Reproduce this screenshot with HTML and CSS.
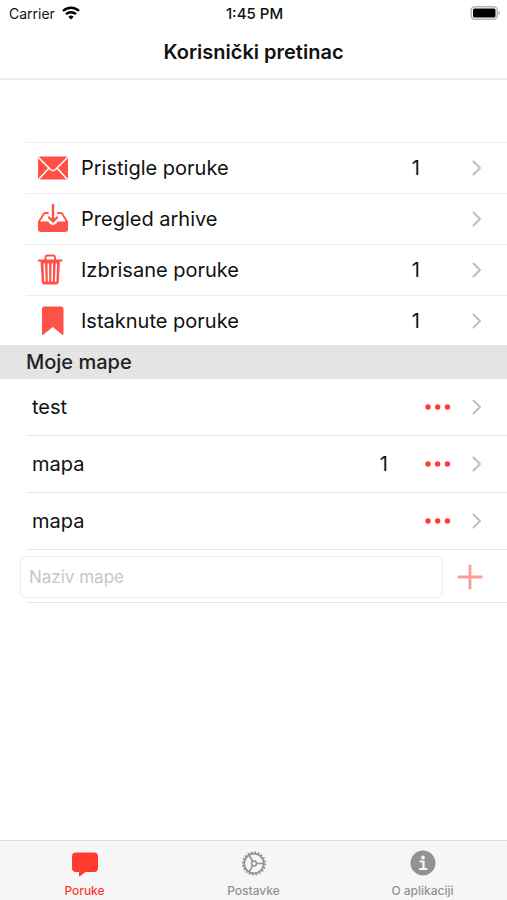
FILE: index.html
```html
<!DOCTYPE html>
<html lang="hr">
<head>
    <meta charset="UTF-8">
    <meta name="viewport" content="width=device-width, initial-scale=1.0">
    <title>Korisnički pretinac</title>
    <link rel="stylesheet" href="styles.css">
</head>
<body>
    <svg class="defs" width="0" height="0" aria-hidden="true">
        <symbol id="chevron" viewBox="0 0 10 16">
            <path d="M1.5 1.5 8 8l-6.500 6.500" fill="none" stroke="#bfbfc1" stroke-width="2" stroke-linecap="round" stroke-linejoin="round"/>
        </symbol>
        <symbol id="dots" viewBox="0 0 26 6">
            <circle cx="3" cy="3" r="2.700"/>
            <circle cx="12.700" cy="3" r="2.700"/>
            <circle cx="22.400" cy="3" r="2.700"/>
        </symbol>
    </svg>

    <div class="status-bar">
        <div class="carrier">
            <span>Carrier</span>
            <svg width="20" height="14" viewBox="0 0 18 14" fill="none" stroke="#000" stroke-width="2.400">
                <path d="M1 5a11.500 11.500 0 0 1 16 0"/>
                <path d="M4 8.200a7.200 7.200 0 0 1 10 0"/>
                <path d="M9 13.500 6.300 10.800a4 4 0 0 1 5.400 0z" fill="#000" stroke="none"/>
            </svg>
        </div>
        <span class="time">1:45 PM</span>
        <div class="battery">
            <svg width="30" height="14" viewBox="0 0 30 14">
                <rect x="1.200" y="0.800" width="26" height="12.400" rx="3.500" fill="#fff" stroke="#b4b4b4" stroke-width="1.500"/>
                <rect x="3" y="2.500" width="22.500" height="9" rx="1.500" fill="#000"/>
                <path d="M28.400 4.800c2 .8 2 3.600 0 4.400z" fill="#b4b4b4"/>
            </svg>
        </div>
    </div>

    <header class="nav-bar">
        <h1>Korisnički pretinac</h1>
    </header>

    <main>
        <ul class="list folders">
            <li>
                <a href="#" class="row">
                    <svg class="icon" width="32" height="32" viewBox="0 0 32 32">
                        <rect x="1" y="4.500" width="30" height="23" rx="2" fill="#ff5148"/>
                        <path d="M1.500 5.500 13.500 17.500q2.500 2.300 5 0L30.500 5.500M2 27 12 16M30 27 20 16" fill="none" stroke="#fff" stroke-width="1.500"/>
                    </svg>
                    <span class="name">Pristigle poruke</span>
                    <span class="count">1</span>
                    <svg class="chevron" width="10" height="16"><use href="#chevron"/></svg>
                </a>
            </li>
            <li>
                <a href="#" class="row">
                    <svg class="icon" width="32" height="32" viewBox="0 0 32 32" fill="none" stroke="#ff5148" stroke-width="1.800" stroke-linecap="round" stroke-linejoin="round">
                        <path d="M1 18.500h9.500c1.500 0 1.500 1.200 2.500 2.200q3 2.600 6 0c1-1 1-2.200 2.500-2.200H31v7.500a3 3 0 0 1-3 3H4a3 3 0 0 1-3-3z" fill="#ff5148" stroke="none"/>
                        <path d="M11 10H8.500q-1.200 0-1.800 1L2 18.500M21 10h2.500q1.200 0 1.800 1L30 18.500"/>
                        <path d="M16 2v15.500M12 14.500l4 4 4-4" stroke-width="2.400"/>
                    </svg>
                    <span class="name">Pregled arhive</span>
                    <svg class="chevron" width="10" height="16"><use href="#chevron"/></svg>
                </a>
            </li>
            <li>
                <a href="#" class="row">
                    <svg class="icon" width="32" height="32" viewBox="0 0 32 32" fill="none" stroke="#ff5148" stroke-linecap="round" stroke-linejoin="round">
                        <path d="M1.700 6.500h23" stroke-width="1.900"/>
                        <path d="M8.500 6V3.500q0-2 2-2h5.500q2 0 2 2V6" stroke-width="1.900"/>
                        <path d="M3.500 7h19.500L21.800 28q-.2 2.500-2.700 2.500H7.500Q5 30.500 4.800 28z" fill="#ff5148" stroke="none"/>
                        <path d="M7.300 10l.6 17M11.300 10l.2 17M15.300 10l-.2 17M19.300 10l-.6 17" stroke="#fff" stroke-width="1.500"/>
                    </svg>
                    <span class="name">Izbrisane poruke</span>
                    <span class="count">1</span>
                    <svg class="chevron" width="10" height="16"><use href="#chevron"/></svg>
                </a>
            </li>
            <li>
                <a href="#" class="row">
                    <svg class="icon" width="32" height="32" viewBox="0 0 32 32">
                        <path d="M5 4q0-2.500 2.500-2.500h16.500q2.500 0 2.500 2.500v25q0 1.800-1.500.6L15.800 22 6.500 29.600q-1.500 1.200-1.500-.6z" fill="#ff5148"/>
                    </svg>
                    <span class="name">Istaknute poruke</span>
                    <span class="count">1</span>
                    <svg class="chevron" width="10" height="16"><use href="#chevron"/></svg>
                </a>
            </li>
        </ul>

        <h2>Moje mape</h2>

        <ul class="list maps">
            <li class="row">
                <a href="#" class="name">test</a>
                <button type="button" class="more" aria-label="Opcije"><svg width="26" height="6"><use href="#dots"/></svg></button>
                <svg class="chevron" width="10" height="16"><use href="#chevron"/></svg>
            </li>
            <li class="row">
                <a href="#" class="name">mapa</a>
                <span class="count">1</span>
                <button type="button" class="more" aria-label="Opcije"><svg width="26" height="6"><use href="#dots"/></svg></button>
                <svg class="chevron" width="10" height="16"><use href="#chevron"/></svg>
            </li>
            <li class="row">
                <a href="#" class="name">mapa</a>
                <button type="button" class="more" aria-label="Opcije"><svg width="26" height="6"><use href="#dots"/></svg></button>
                <svg class="chevron" width="10" height="16"><use href="#chevron"/></svg>
            </li>
        </ul>

        <form class="new-map">
            <input type="text" placeholder="Naziv mape" aria-label="Naziv mape">
            <button type="button" class="add" aria-label="Dodaj mapu">
                <svg width="26" height="26" viewBox="0 0 26 26" fill="none" stroke="#ff9c98" stroke-width="2.800" stroke-linecap="round">
                    <path d="M13 1.800v22.400M1.800 13h22.400"/>
                </svg>
            </button>
        </form>
    </main>

    <nav class="tab-bar">
        <a href="#" class="tab active">
            <svg width="28" height="28" viewBox="0 0 28 28">
                <path d="M5 3.500h18q4 0 4 4v11.500q0 4-4 4H14.500L9 27.300q-1 .8-1-.5v-3.800H5q-4 0-4-4V7.500q0-4 4-4z" fill="#ff3b30"/>
            </svg>
            <span>Poruke</span>
        </a>
        <a href="#" class="tab">
            <svg width="28" height="28" viewBox="0 0 28 28" fill="none" stroke="#929292">
                <circle cx="14" cy="14.500" r="11.300" stroke-width="1.600" stroke-dasharray="1.750 1.800"/>
                <circle cx="14" cy="14.500" r="9.800" stroke-width="1.800"/>
                <circle cx="14" cy="14.500" r="2.500" stroke-width="1.500"/>
                <path d="M16.500 14.500h7M12.600 12.200 9.100 6.100M12.600 16.800l-3.500 6.100" stroke-width="1.600"/>
            </svg>
            <span>Postavke</span>
        </a>
        <a href="#" class="tab">
            <svg width="28" height="28" viewBox="0 0 28 28">
                <circle cx="14" cy="14" r="12.500" fill="#929292"/>
                <circle cx="14" cy="8.500" r="1.900" fill="#f6f6f6"/>
                <path d="M11.500 12.500h3v7.500M11 20h6.500" fill="none" stroke="#f6f6f6" stroke-width="2.200" stroke-linecap="round"/>
            </svg>
            <span>O aplikaciji</span>
        </a>
    </nav>
</body>
</html>
```
FILE: styles.css
```css
* {
    box-sizing: border-box;
}

body {
    font-family: Inter, "Liberation Sans", sans-serif;
    margin: 0;
    min-height: 100vh;
    display: flex;
    flex-direction: column;
    background: #fff;
    color: #111;
    font-size: 20px;
}

.defs {
    position: absolute;
}

svg {
    display: block;
    flex-shrink: 0;
}

a {
    color: inherit;
    text-decoration: none;
}

button {
    border: none;
    background: none;
    padding: 0;
    cursor: pointer;
}

/* status bar */
.status-bar {
    display: grid;
    grid-template-columns: 1fr auto 1fr;
    align-items: center;
    height: 26px;
    padding: 0 7px 0 9px;
    font-size: 14px;
}

.carrier {
    display: flex;
    align-items: center;
    gap: 6px;
}

.time {
    font-size: 15px;
    font-weight: 500;
}

.battery {
    justify-self: end;
}

.nav-bar {
    height: 54px;
    border-bottom: 2px solid #f0f0f0;
    display: flex;
    align-items: center;
    justify-content: center;
}

.nav-bar h1 {
    margin: 0;
    font-size: 20px;
    font-weight: 600;
}

main {
    flex: 1;
    padding-top: 62px;
}

/* lists */
.list {
    list-style: none;
    margin: 0;
    padding: 0 0 0 26px;
}

.row {
    display: flex;
    align-items: center;
    padding-right: 25px;
}

.name {
    flex: 1;
}

.folders {
    border-top: 1px solid #ededed;
    margin-left: 26px;
    padding-left: 0;
}

.folders li {
    border-bottom: 1px solid #ededed;
}

.folders li:last-child {
    border-bottom: none;
}

.folders .row {
    height: 50px;
    padding-left: 11px;
}

.folders li:last-child .row {
    height: 49px;
}

.icon {
    margin-right: 12px;
}

.folders .count {
    margin-right: 52px;
}

h2 {
    margin: 0;
    padding: 0 26px;
    background: #e4e4e4;
    color: #222;
    font-size: 20px;
    font-weight: 500;
    line-height: 34px;
}

.maps .row {
    height: 57px;
    padding-left: 6px;
    border-bottom: 1px solid #e6e6e6;
}

.maps .count {
    margin-right: 37px;
}

.more {
    margin-right: 21px;
    fill: #ff3b30;
}

.new-map {
    display: flex;
    align-items: center;
    gap: 14px;
    height: 53px;
    padding: 0 24px 0 20px;
    background: linear-gradient(#e6e6e6, #e6e6e6) 26px 100% / 100% 1px no-repeat;
}

.new-map input {
    flex: 1;
    min-width: 0;
    height: 42px;
    padding: 0 8px;
    border: 1px solid #ececec;
    border-radius: 6px;
    background: #fff;
    font-family: inherit;
    font-size: 17px;
    outline: none;
}

.new-map input::placeholder {
    color: #c6c6c8;
}

/* bottom tabs */
.tab-bar {
    display: flex;
    height: 60px;
    border-top: 1px solid #dcdcdc;
    background: #f6f6f6;
}

.tab {
    flex: 1;
    display: flex;
    flex-direction: column;
    align-items: center;
    gap: 6px;
    padding-top: 8px;
    color: #929292;
    font-size: 12px;
    font-weight: 500;
    line-height: 16px;
}

.tab.active {
    color: #ff3b30;
}
```
